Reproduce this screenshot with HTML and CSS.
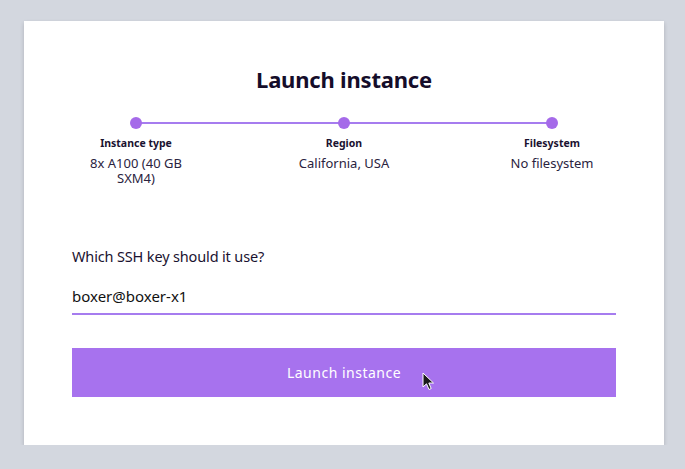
FILE: index.html
```html
<!DOCTYPE html>
<html>
<head>
<meta charset="utf-8">
<link rel="stylesheet" href="styles.css">
</head>
<body>
<div class="page">
  <div class="card">
    <h1 class="title">Launch instance</h1>
    <div class="stepper">
      <div class="step">
        <span class="dot"></span>
        <div class="step-label">Instance type</div>
        <div class="step-value">8x A100 (40 GB SXM4)</div>
      </div>
      <div class="step">
        <span class="dot"></span>
        <div class="step-label">Region</div>
        <div class="step-value">California, USA</div>
      </div>
      <div class="step">
        <span class="dot"></span>
        <div class="step-label">Filesystem</div>
        <div class="step-value">No filesystem</div>
      </div>
    </div>
    <div class="field">
      <label class="field-label">Which SSH key should it use?</label>
      <div class="input">boxer@boxer-x1</div>
    </div>
    <button class="launch">Launch instance
      <svg class="cursor" width="14" height="20" viewBox="0 0 14 20">
        <path d="M1 1 L1 15 L4.5 11.8 L7 17.5 L9.2 16.5 L6.8 11 L11.5 11 Z" fill="#1a1a1a" stroke="#ffffff" stroke-width="1" stroke-linejoin="round"/>
      </svg>
    </button>
  </div>
</div>
</body>
</html>
```

FILE: styles.css
```css
* { box-sizing: border-box; }
html, body {
  margin: 0;
  padding: 0;
  background: #d3d7df;
  font-family: "Noto Sans", "Open Sans", sans-serif;
  color: #1a1230;
}
.page {
  padding: 21px 21px 0 24px;
}
.card {
  width: 640px;
  height: 424px;
  background: #ffffff;
  box-shadow: 0 2px 4px rgba(0, 0, 0, 0.18);
  padding: 46px 48px 48px;
  display: flex;
  flex-direction: column;
}
.title {
  margin: 0;
  font-size: 22px;
  line-height: 24px;
  font-weight: 700;
  text-align: center;
  color: #150d2a;
  letter-spacing: -0.2px;
}
.stepper {
  position: relative;
  margin: 26px -40px 0;
  display: grid;
  grid-template-columns: repeat(3, 1fr);
}
.stepper::before {
  content: "";
  position: absolute;
  left: 104px;
  right: 104px;
  top: 5px;
  height: 2px;
  background: #a67cef;
}
.step {
  display: flex;
  flex-direction: column;
  align-items: center;
  text-align: center;
}
.dot {
  position: relative;
  width: 12px;
  height: 12px;
  border-radius: 50%;
  background: #a56ae9;
}
.step-label {
  margin-top: 7px;
  font-size: 10.5px;
  line-height: 14px;
  font-weight: 700;
  color: #1a1230;
}
.step-value {
  margin-top: 6px;
  font-size: 13px;
  line-height: 15px;
  max-width: 110px;
  color: #2a2340;
}
.field {
  margin-top: 60px;
  display: flex;
  flex-direction: column;
}
.field-label {
  font-size: 14.5px;
  line-height: 20px;
  letter-spacing: -0.15px;
  color: #1a1230;
}
.input {
  margin-top: 20px;
  font-size: 15px;
  line-height: 20px;
  padding-bottom: 7px;
  border-bottom: 2px solid #a67cef;
  color: #111111;
}
.launch {
  position: relative;
  margin-top: 33px;
  height: 50px;
  width: 100%;
  border: none;
  background: #a772ee;
  color: #ffffff;
  font-family: "Noto Sans", "Open Sans", sans-serif;
  font-size: 14px;
  letter-spacing: 0.5px;
  padding: 0;
}
.cursor {
  position: absolute;
  left: 350px;
  top: 24px;
}
```
